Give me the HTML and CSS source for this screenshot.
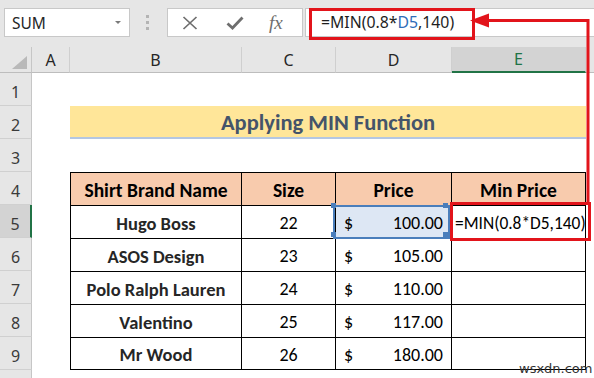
FILE: index.html
```html
<!DOCTYPE html>
<html>
<head>
<meta charset="utf-8">
<link rel="stylesheet" href="styles.css">
</head>
<body>
<div class="app">
  <div class="toolbar">
    <div class="namebox"><span class="name">SUM</span><span class="caret"></span></div>
    <div class="grip"><i></i><i></i><i></i></div>
    <div class="fxbox">
      <svg class="ico" width="16" height="14" viewBox="0 0 16 14"><path d="M1.5 1 L14.5 13 M14.5 1 L1.5 13" stroke="#6e6e6e" stroke-width="1.7" fill="none"/></svg>
      <svg class="ico" width="18" height="14" viewBox="0 0 18 14"><path d="M1.5 7.5 L6.5 12 L16.5 1.5" stroke="#6e6e6e" stroke-width="2.8" fill="none"/></svg>
      <span class="fx">fx</span>
    </div>
    <div class="formula">=MIN(0.8*<span class="ref">D5</span>,140)</div>
  </div>

  <div class="sheet">
    <div class="corner"><span class="tri"></span></div>
    <div class="colh">A</div>
    <div class="colh">B</div>
    <div class="colh">C</div>
    <div class="colh">D</div>
    <div class="colh active">E</div>
    <div class="colh last"></div>

    <div class="rowh r1">1</div>
    <div class="rowh r2">2</div>
    <div class="rowh r3">3</div>
    <div class="rowh r4">4</div>
    <div class="rowh r5 active">5</div>
    <div class="rowh r6">6</div>
    <div class="rowh r7">7</div>
    <div class="rowh r8">8</div>
    <div class="rowh r9">9</div>
    <div class="rowh r10"></div>

    <div class="title">Applying MIN Function</div>

    <div class="table">
      <div class="th">Shirt Brand Name</div>
      <div class="th">Size</div>
      <div class="th">Price</div>
      <div class="th">Min Price</div>

      <div class="td name">Hugo Boss</div>
      <div class="td num">22</div>
      <div class="td price sel"><span>$</span><span>100.00</span></div>
      <div class="td formula-cell">=MIN(0.8*D5,140)</div>

      <div class="td name">ASOS Design</div>
      <div class="td num">23</div>
      <div class="td price"><span>$</span><span>105.00</span></div>
      <div class="td"></div>

      <div class="td name">Polo Ralph Lauren</div>
      <div class="td num">24</div>
      <div class="td price"><span>$</span><span>110.00</span></div>
      <div class="td"></div>

      <div class="td name">Valentino</div>
      <div class="td num">25</div>
      <div class="td price"><span>$</span><span>117.00</span></div>
      <div class="td"></div>

      <div class="td name">Mr Wood</div>
      <div class="td num">26</div>
      <div class="td price"><span>$</span><span>180.00</span></div>
      <div class="td"></div>
    </div>
  </div>

  <svg class="annot" width="594" height="378" viewBox="0 0 594 378">
    <rect x="310.5" y="9.5" width="163" height="29" fill="none" stroke="#e2141b" stroke-width="3"/>
    <rect x="451.5" y="203.5" width="138" height="36" fill="none" stroke="#e2141b" stroke-width="3"/>
    <polyline points="588,202 588,20.5 486,20.5" fill="none" stroke="#e2141b" stroke-width="3"/>
    <polygon points="470,20.5 489,13.5 489,27.5" fill="#e2141b"/>
  </svg>
  <div class="watermark">wsxdn.com</div>
</div>
</body>
</html>
```

FILE: styles.css
```css
* { box-sizing: border-box; }
html, body { margin: 0; padding: 0; }
body { width: 594px; height: 378px; overflow: hidden; background: #fff; }

.app { position: relative; width: 594px; height: 378px; overflow: hidden; font-family: "Noto Sans", "Open Sans", sans-serif; }

/* toolbar */
.toolbar { height: 47px; background: #e6e6e6; display: flex; align-items: flex-start; padding: 8px 0 0 4px; }
.namebox { width: 126px; height: 29px; background: #fff; border: 1px solid #c8c8c8; display: flex; align-items: center; justify-content: space-between; padding: 0 8px 0 7px; }
.name { font-size: 15.5px; color: #262626; }
.caret { width: 0; height: 0; border-left: 3.5px solid transparent; border-right: 3.5px solid transparent; border-top: 3.5px solid #7a7a7a; }
.grip { margin-left: 16px; width: 4px; height: 29px; display: flex; flex-direction: column; justify-content: center; gap: 3px; }
.grip i { display: block; width: 3px; height: 3px; background: #b4b4b4; }
.fxbox { margin-left: 17px; width: 136px; height: 29px; background: #fff; border: 1px solid #c8c8c8; display: flex; align-items: center; padding-left: 14px; gap: 28px; }
.ico { display: block; }
.fx { font-family: "Liberation Serif", serif; font-style: italic; font-size: 19px; color: #6e6e6e; margin-left: -3px; }
.formula { margin-left: 2px; flex: 1; height: 29px; background: #fff; border-top: 1px solid #c8c8c8; border-bottom: 1px solid #c8c8c8; border-left: 1px solid #c8c8c8; padding-left: 15px; font-size: 15.8px; line-height: 27px; color: #1e1e1e; white-space: nowrap; }
.ref { color: #2f6db8; }

/* sheet */
.sheet { display: grid; grid-template-columns: 32px 38px 172px 94px 116px 134px 8px; grid-template-rows: 26px repeat(10, 33px); }
.corner { background: #e6e6e6; border-right: 1px solid #c6c6c6; border-bottom: 1px solid #bdbdbd; position: relative; }
.tri { position: absolute; right: 4px; bottom: 3px; width: 0; height: 0; border-left: 15px solid transparent; border-bottom: 13px solid #b9b9b9; }
.colh { background: #e6e6e6; border-right: 1px solid #cfcfcf; border-bottom: 1px solid #bdbdbd; font-size: 16px; color: #262626; display: flex; justify-content: center; align-items: flex-end; padding-bottom: 1px; }
.colh.active { background: #d3d3d3; color: #217346; border-bottom: 2px solid #217346; }
.colh.last { border-right: none; }
.rowh { grid-column: 1; background: #e6e6e6; border-right: 1px solid #c6c6c6; border-bottom: 1px solid #d0d0d0; font-size: 16px; color: #3a3a3a; display: flex; justify-content: center; align-items: flex-end; padding-bottom: 2px; }
.rowh.active { background: #d3d3d3; border-right: 2px solid #217346; color: #3a3a3a; }

.title { grid-column: 3 / 7; grid-row: 3; background: #ffe699; border-bottom: 2px solid #b4c7e2; font-family: "Carlito", "Lato", sans-serif; font-weight: 700; font-size: 22.5px; color: #44546a; display: flex; justify-content: center; align-items: center; padding-top: 1px; }

.table { grid-column: 3 / 7; grid-row: 5 / 11; display: grid; grid-template-columns: 171px 94px 116px 134px; grid-template-rows: repeat(5, 33px) 32px; border-left: 1px solid #000; border-top: 1px solid #000; font-family: "Carlito", "Lato", sans-serif; font-size: 18px; color: #000; }
.th, .td { border-right: 1px solid #000; border-bottom: 1px solid #000; display: flex; align-items: center; justify-content: center; padding-top: 2px; white-space: nowrap; }
.th { background: #f8cbad; font-weight: 700; font-size: 19.5px; }
.td.name { font-weight: 700; font-size: 18.5px; }
.td.price { justify-content: space-between; padding: 2px 8px 0 8px; }
.td.sel { background: #dde7f4; position: relative; }
.td.sel::before { content: ""; position: absolute; left: -3px; top: -1px; right: 1px; bottom: -1px; border: 2px solid #4a7ebb; }
.td.sel::after { content: ""; position: absolute; left: -5px; top: -3px; width: 5px; height: 5px; background: #4a7ebb; box-shadow: 0 29px 0 #4a7ebb, 112px 0 0 #4a7ebb, 112px 29px 0 #4a7ebb; }
.td.formula-cell { justify-content: flex-start; padding-left: 3px; overflow: visible; font-size: 17.4px; }

.annot { position: absolute; left: 0; top: 0; pointer-events: none; }
.watermark { position: absolute; left: 519px; top: 361px; font-family: "DejaVu Sans", sans-serif; font-size: 13px; color: #333; }
```
